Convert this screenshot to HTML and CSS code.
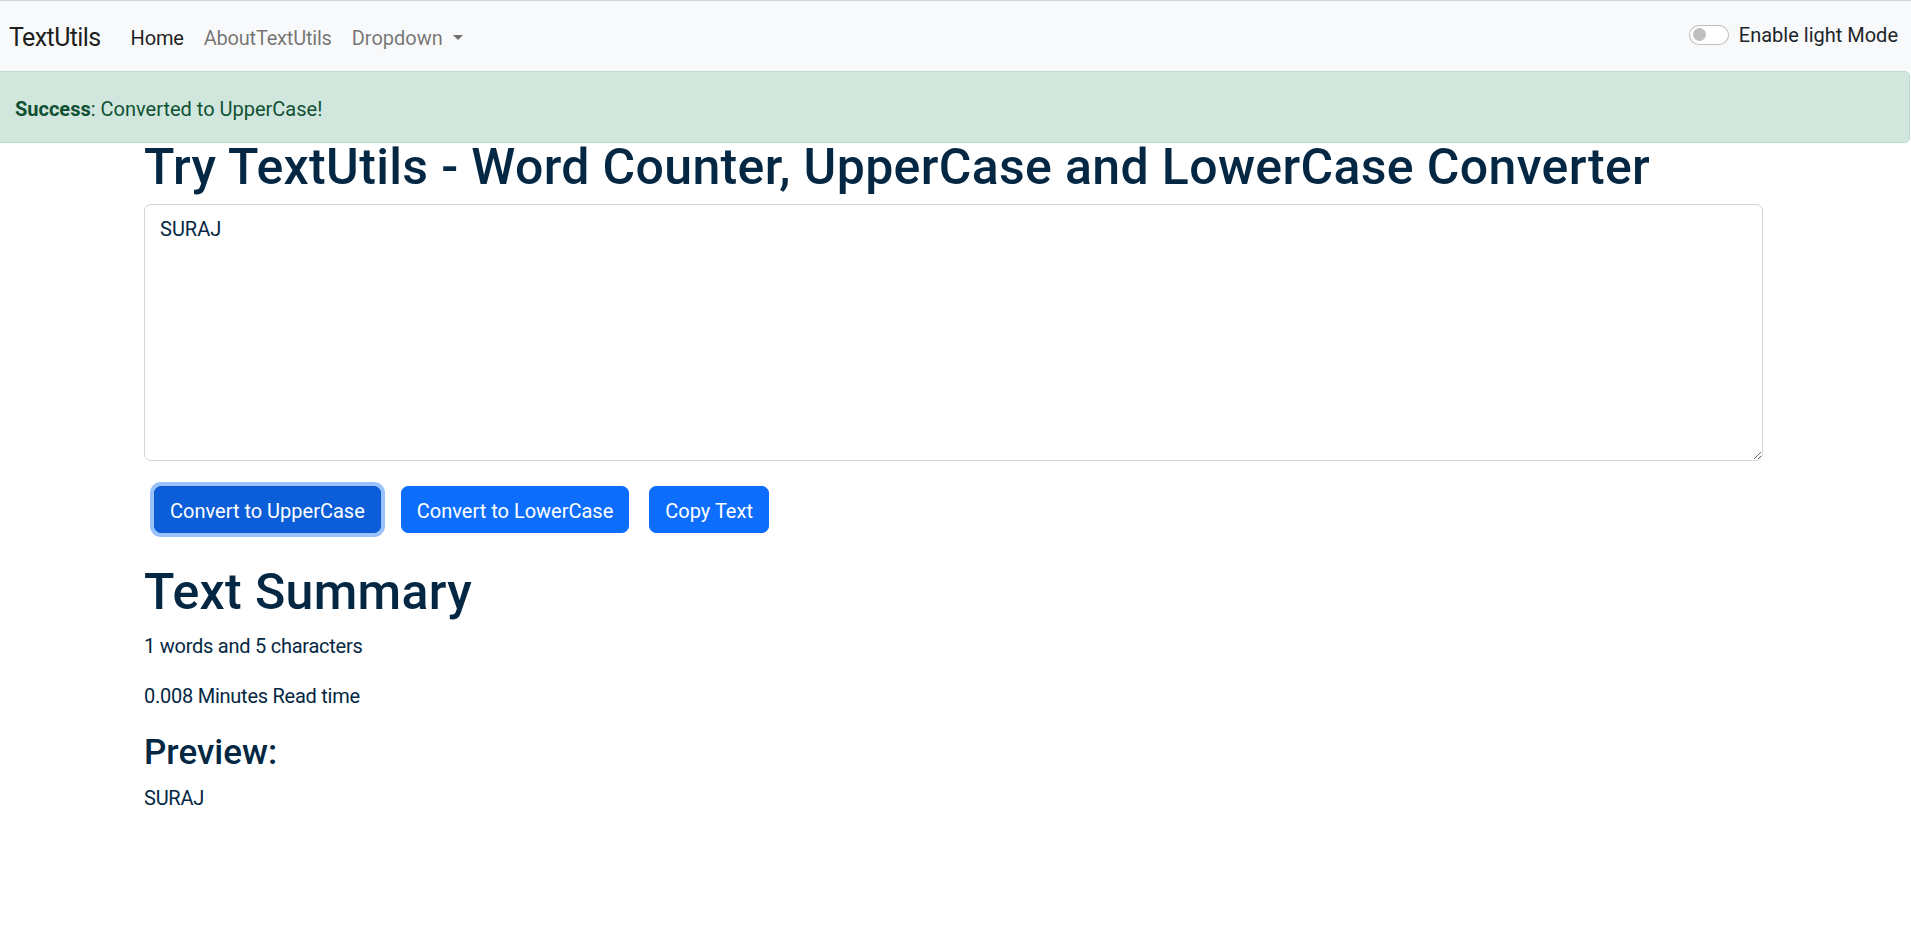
FILE: index.html
```html
<!DOCTYPE html>
<html lang="en">
<head>
<meta charset="utf-8">
<title>TextUtils - Home</title>
<link rel="stylesheet" href="styles.css">
</head>
<body>
<nav class="navbar">
  <a class="brand" href="#">TextUtils</a>
  <ul class="nav-links">
    <li><a class="nav-link active" href="#">Home</a></li>
    <li><a class="nav-link" href="#">AboutTextUtils</a></li>
    <li><a class="nav-link dropdown" href="#">Dropdown<span class="caret"></span></a></li>
  </ul>
  <div class="mode-switch">
    <span class="switch-track"><span class="switch-knob"></span></span>
    <label class="switch-label">Enable light Mode</label>
  </div>
</nav>

<div class="alert-wrap">
  <div class="alert"><strong>Success</strong>: Converted to UpperCase!</div>
</div>

<div class="page">
  <div class="container">
    <h1 class="heading">Try TextUtils - Word Counter, UpperCase and LowerCase Converter</h1>
    <div class="form-group">
      <textarea class="text-box" rows="8">SURAJ</textarea>
    </div>
    <div class="btn-row">
      <button class="btn btn-focus">Convert to UpperCase</button>
      <button class="btn">Convert to LowerCase</button>
      <button class="btn">Copy Text</button>
    </div>
  </div>

  <div class="container summary">
    <h1 class="heading">Text Summary</h1>
    <p class="info">1 words and 5 characters</p>
    <p class="info">0.008 Minutes Read time</p>
    <h3 class="sub-heading">Preview:</h3>
    <p class="info">SURAJ</p>
  </div>
</div>
</body>
</html>
```
FILE: styles.css
```css
* { box-sizing: border-box; }

html, body {
  margin: 0;
  padding: 0;
  background: #ffffff;
}

body {
  font-family: Roboto, "Liberation Sans", Arial, sans-serif;
  font-size: 20px;
  line-height: 30px;
  color: #212529;
}

/* ---------- navbar ---------- */
.navbar {
  display: flex;
  align-items: center;
  height: 71px;
  padding: 10px 13px 10px 9px;
  background: #f8f9fa;
  border-top: 1px solid #d4d5d6;
}

.brand {
  font-size: 25px;
  line-height: 37.5px;
  padding: 7.5px 0 4.5px;
  margin-right: 20px;
  color: rgba(0, 0, 0, 0.9);
  text-decoration: none;
  letter-spacing: -0.6px;
}

.nav-links {
  display: flex;
  list-style: none;
  margin: 0;
  padding: 0;
}

.nav-link {
  display: block;
  padding: 11.5px 10px 8.5px;
  font-size: 20px;
  line-height: 30px;
  color: rgba(0, 0, 0, 0.55);
  text-decoration: none;
  letter-spacing: -0.2px;
}

.nav-link.active {
  color: rgba(0, 0, 0, 0.9);
}

.dropdown {
  letter-spacing: 0;
}

.caret {
  display: inline-block;
  margin-left: 10px;
  vertical-align: 5px;
  border-top: 5px solid rgba(0, 0, 0, 0.55);
  border-left: 5px solid transparent;
  border-right: 5px solid transparent;
}

.mode-switch {
  margin-left: auto;
  display: flex;
  align-items: flex-start;
  gap: 10px;
  height: 30px;
  margin-top: -2px;
}

.switch-track {
  display: block;
  width: 40px;
  height: 20px;
  margin-top: 4.5px;
  border: 1px solid rgba(0, 0, 0, 0.25);
  border-radius: 20px;
  background: #ffffff;
  position: relative;
}

.switch-knob {
  position: absolute;
  left: 3px;
  top: 2.5px;
  width: 13px;
  height: 13px;
  border-radius: 50%;
  background: #bfbfbf;
}

.switch-label {
  font-size: 20px;
  line-height: 30px;
  color: #212529;
}

/* ---------- alert ---------- */
.alert-wrap {
  height: 62.5px;
}

.alert {
  margin: 0 1px 0 -6px;
  padding: 21.5px 20px 18.5px;
  font-size: 20px;
  line-height: 30px;
  color: #0f5132;
  background: #d1e7dd;
  border: 1px solid #badbcc;
  border-radius: 5px;
}

.alert strong {
  font-weight: 700;
}

/* ---------- main ---------- */
.page {
  padding-right: 4px;
}

.container {
  width: 1619px;
  margin: 0 auto;
  color: #042743;
}

.heading {
  margin: 0 0 7px;
  padding-top: 3px;
  font-size: 50px;
  line-height: 60px;
  font-weight: 500;
  color: #042743;
  letter-spacing: 0.35px;
}

.form-group {
  margin-bottom: 20px;
}

.text-box {
  display: block;
  width: 100%;
  height: 257.5px;
  padding: 9px 15px 6px;
  font-family: inherit;
  font-size: 20px;
  line-height: 30px;
  color: #042743;
  background: #ffffff;
  border: 1px solid #ced4da;
  border-radius: 7px;
  resize: vertical;
  outline: none;
}

.btn-row {
  display: flex;
  align-items: flex-start;
}

.btn {
  margin: 5px 10px;
  padding: 9px 15px 6px;
  font-family: inherit;
  font-size: 20px;
  line-height: 30px;
  color: #ffffff;
  background: #0d6efd;
  border: 1px solid #0d6efd;
  border-radius: 7px;
  cursor: pointer;
}

.btn-focus {
  background: #0b5ed7;
  border-color: #0a58ca;
  box-shadow: 0 0 0 4px #98c1fe;
}

.summary {
  margin-top: 21px;
}

.info {
  margin: 0 0 18.5px;
  padding-top: 1.5px;
  font-size: 20px;
  line-height: 30px;
  letter-spacing: -0.25px;
}

.sub-heading {
  margin: 0 0 7.5px;
  padding-top: 2.5px;
  font-size: 35px;
  line-height: 42px;
  font-weight: 500;
  color: #042743;
}
```
